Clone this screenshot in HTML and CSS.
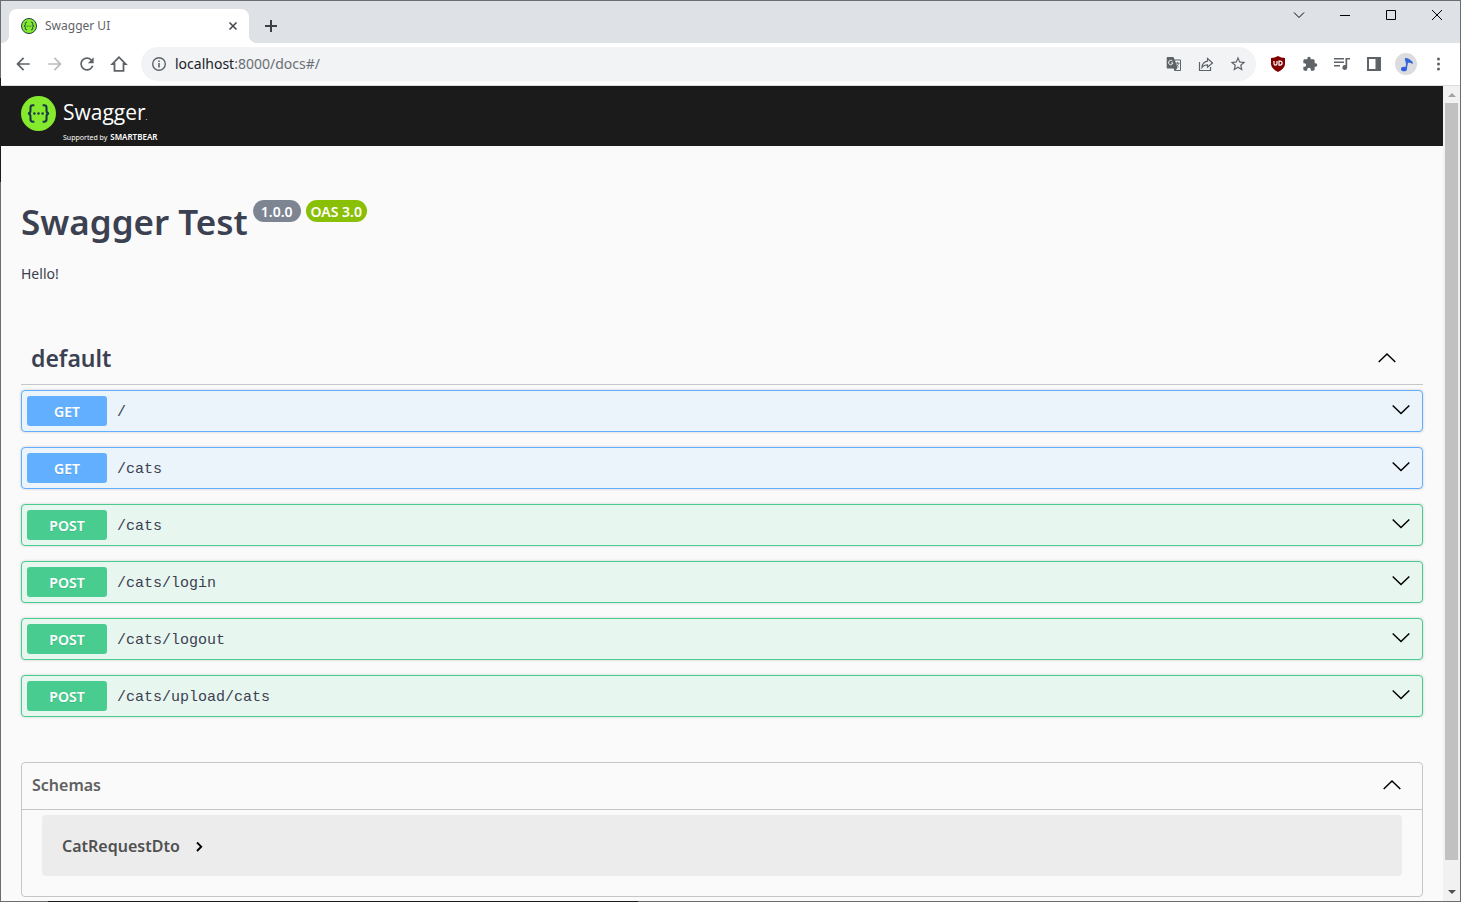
FILE: index.html
```html
<!DOCTYPE html>
<html lang="en">
<head>
<meta charset="utf-8">
<title>Swagger UI</title>
<link rel="stylesheet" href="styles.css">
</head>
<body>
<svg class="defs" aria-hidden="true">
  <symbol id="chev-down" viewBox="0 0 20 20"><path d="M1.700 4.500 10 12.500l8.300-8" fill="none" stroke="#000" stroke-width="1.500"/></symbol>
  <symbol id="chev-up" viewBox="0 0 20 20"><path d="M1.700 14 10 6l8.300 8" fill="none" stroke="#000" stroke-width="1.500"/></symbol>
  <symbol id="swagger-mark" viewBox="0 0 34 34">
    <g fill="none" stroke="#173647" stroke-width="2"><path d="M13 9h-1.500q-2.300 0-2.300 2.300v3q0 2.500-2.400 2.700 2.400.2 2.400 2.700v3Q9.200 25 11.500 25H13M21 9h1.500q2.300 0 2.300 2.300v3q0 2.500 2.400 2.700-2.400.2-2.400 2.700v3q0 2.300-2.300 2.300H21"/></g>
    <g fill="#173647"><circle cx="13" cy="17" r="1.200"/><circle cx="17" cy="17" r="1.200"/><circle cx="21" cy="17" r="1.200"/></g>
  </symbol>
</svg>
<div class="window">
  <header class="titlebar">
    <div class="tab">
      <svg class="favicon" viewBox="0 0 34 34"><circle cx="17" cy="17" r="16" fill="#85ea2d" stroke="#173647" stroke-width="2"/><use href="#swagger-mark"/></svg>
      <span class="tab-title">Swagger UI</span>
      <button class="tab-close" aria-label="Close tab"><svg width="16" height="16" viewBox="0 0 16 16"><path d="m4.500 4.500 7 7m0-7-7 7" stroke="#45494d" stroke-width="1.600"/></svg></button>
    </div>
    <button class="new-tab" aria-label="New tab"><svg width="16" height="16" viewBox="0 0 16 16"><path d="M8 2v12M2 8h12" stroke="#3c4043" stroke-width="2"/></svg></button>
    <div class="controls">
      <button aria-label="Search tabs"><svg width="12" height="12" viewBox="0 0 12 12"><path d="m1 3.500 5 5 5-5"/></svg></button>
      <button aria-label="Minimize"><svg width="12" height="12" viewBox="0 0 12 12"><path d="M1 6.500h10"/></svg></button>
      <button aria-label="Maximize"><svg width="12" height="12" viewBox="0 0 12 12"><path d="M1.500 1.500h9v9h-9z"/></svg></button>
      <button aria-label="Close"><svg width="12" height="12" viewBox="0 0 12 12"><path d="m1 1 10 10m0-10L1 11"/></svg></button>
    </div>
  </header>
  <nav class="toolbar">
    <button aria-label="Back"><svg width="20" height="20" viewBox="0 0 24 24"><path d="M20 11H7.830l5.590-5.590L12 4l-8 8 8 8 1.410-1.410L7.830 13H20v-2z"/></svg></button>
    <button class="faded" aria-label="Forward"><svg width="20" height="20" viewBox="0 0 24 24"><path d="m12 4-1.410 1.410L16.170 11H4v2h12.170l-5.580 5.590L12 20l8-8z"/></svg></button>
    <button aria-label="Reload"><svg width="20" height="20" viewBox="0 0 24 24"><path d="M17.650 6.350C16.200 4.900 14.210 4 12 4c-4.420 0-7.990 3.580-7.990 8s3.570 8 7.990 8c3.730 0 6.840-2.550 7.730-6h-2.080c-.82 2.330-3.040 4-5.650 4-3.310 0-6-2.690-6-6s2.690-6 6-6c1.660 0 3.140.69 4.220 1.780L13 11h7V4l-2.350 2.350z"/></svg></button>
    <button aria-label="Home"><svg width="18" height="18" viewBox="0 0 18 18"><path d="M9 2.200 2.300 9h2.200v6.800h9V9h2.200z" fill="none" stroke="#5f6368" stroke-width="1.800"/></svg></button>
    <div class="omnibox">
      <svg class="info" width="16" height="16" viewBox="0 0 16 16"><circle cx="8" cy="8" r="6.300" fill="none" stroke="#5f6368" stroke-width="1.400"/><path d="M7.200 7h1.600v4.500H7.200zM7.200 4.400h1.600V6H7.200z"/></svg>
      <div class="url"><span class="host">localhost</span>:8000/docs#/</div>
      <button aria-label="Translate"><svg width="16" height="16" viewBox="0 0 16 16"><path d="M1.500 1h6l1 2.500h5.500a1 1 0 0 1 1 1V14a1 1 0 0 1-1 1H8.500l-1-2.500h-6a.8.8 0 0 1-.8-.8V1.800A.8.800 0 0 1 1.500 1z"/><path d="M9 4.500h5V14H9.800l1.700-2z" fill="#f1f3f4"/><path d="M6.500 5.200A2.200 2.200 0 1 0 6.900 7H5" fill="none" stroke="#f1f3f4" stroke-width="1"/><path d="M9.500 7.200h4M11.500 6v1.200m1.300 0q-.8 2.500-3 3.800m.5-2.500q.8 1.500 2.500 2.700" fill="none" stroke="#5f6368" stroke-width=".9"/></svg></button>
      <button aria-label="Share"><svg width="16" height="16" viewBox="0 0 16 16"><path d="M1.500 6v8.500h11V11M9.500 2.500 14.500 7l-5 4.300V8.800q-3.500-.1-5.500 2.700.3-5.500 5.500-6.300z" fill="none" stroke="#5f6368" stroke-width="1.200"/></svg></button>
      <button aria-label="Bookmark"><svg width="18" height="18" viewBox="0 0 24 24"><path d="m22 9.240-7.190-.62L12 2 9.190 8.630 2 9.240l5.460 4.730L5.820 21 12 17.270 18.180 21l-1.630-7.030L22 9.240zM12 15.400l-3.760 2.270 1-4.280-3.320-2.880 4.380-.38L12 6.100l1.710 4.040 4.380.38-3.320 2.880 1 4.280L12 15.400z"/></svg></button>
    </div>
    <div class="extensions">
      <button aria-label="uBlock Origin"><svg width="16" height="16" viewBox="0 0 16 16"><path d="M8 0q3.200 2 7 2v6q0 4.500-7 8-7-3.500-7-8V2q3.800 0 7-2z" fill="#800000"/><path d="M4 5v2.800q0 1.400 1.500 1.400T7 7.800V5m2 .1h1.100q2 0 2 2t-2 2H9z" fill="none" stroke="#fff" stroke-width="1.200"/></svg></button>
      <button aria-label="Extensions"><svg width="16" height="16" viewBox="0 0 24 24"><path d="M20.500 11H19V7c0-1.100-.9-2-2-2h-4V3.500a2.500 2.500 0 0 0-5 0V5H4c-1.100 0-1.990.9-1.990 2v3.800H3.500c1.490 0 2.700 1.210 2.700 2.700s-1.210 2.700-2.700 2.700H2V20c0 1.100.9 2 2 2h3.800v-1.500c0-1.490 1.210-2.700 2.700-2.700s2.700 1.210 2.700 2.700V22H17c1.100 0 2-.9 2-2v-4h1.500a2.500 2.500 0 0 0 0-5z"/></svg></button>
      <button aria-label="Media"><svg width="18" height="16" viewBox="0 0 18 16"><path d="M1 2h10v1.500H1zM1 5.500h10V7H1zM1 9h6v1.500H1z"/><path d="M12.500 2H17v1.500h-2.800v8A2.400 2.400 0 1 1 12.500 9.200z"/></svg></button>
      <button aria-label="Side panel"><svg width="14" height="14" viewBox="0 0 14 14"><path d="M0 0h14v14H0zM2 2v10h6.500V2z" fill-rule="evenodd"/></svg></button>
      <button aria-label="Profile"><svg width="22" height="22" viewBox="0 0 22 22"><circle cx="11" cy="11" r="11" fill="#dadce0"/><path d="M10 5q3.500-.5 7.500 3.800L18 11q-3-1.700-5.500-1.200l-.8 5.500" fill="#3367d6"/><path d="m10.500 5.500 1.600 4-1 6" fill="none" stroke="#3367d6" stroke-width="1.600"/><ellipse cx="9" cy="16" rx="3" ry="2.300" fill="#2f5fe0"/></svg></button>
      <button aria-label="Menu"><svg width="16" height="16" viewBox="0 0 16 16"><circle cx="8.500" cy="3" r="1.500"/><circle cx="8.500" cy="8" r="1.500"/><circle cx="8.500" cy="13" r="1.500"/></svg></button>
    </div>
  </nav>
  <div class="viewport">
    <div class="page">
      <div class="topbar">
        <a class="logo" href="#" aria-label="Swagger">
          <svg class="logo-mark" viewBox="0 0 34 34"><circle cx="17" cy="17" r="17" fill="#85ea2d"/><use href="#swagger-mark"/></svg>
          <span class="logo-words">
            <span class="logo-name">Swagger<i>.</i></span>
            <span class="logo-by">Supported by <b>SMARTBEAR</b></span>
          </span>
        </a>
      </div>
      <main class="content">
        <div class="info-head">
          <h1>Swagger Test</h1>
          <span class="badge">1.0.0</span>
          <span class="badge oas">OAS 3.0</span>
        </div>
        <p class="description">Hello!</p>
        <section>
          <h2 class="tag"><span>default</span><button aria-label="Collapse"><svg width="20" height="20"><use href="#chev-up"/></svg></button></h2>
          <div class="operations">
            <button class="op get"><span class="method">GET</span><span class="path">/</span><svg width="20" height="20"><use href="#chev-down"/></svg></button>
            <button class="op get"><span class="method">GET</span><span class="path">/cats</span><svg width="20" height="20"><use href="#chev-down"/></svg></button>
            <button class="op post"><span class="method">POST</span><span class="path">/cats</span><svg width="20" height="20"><use href="#chev-down"/></svg></button>
            <button class="op post"><span class="method">POST</span><span class="path">/cats/login</span><svg width="20" height="20"><use href="#chev-down"/></svg></button>
            <button class="op post"><span class="method">POST</span><span class="path">/cats/logout</span><svg width="20" height="20"><use href="#chev-down"/></svg></button>
            <button class="op post"><span class="method">POST</span><span class="path">/cats/upload/cats</span><svg width="20" height="20"><use href="#chev-down"/></svg></button>
          </div>
        </section>
        <section class="models">
          <button class="models-head"><span>Schemas</span><svg width="20" height="20"><use href="#chev-up"/></svg></button>
          <button class="model"><span>CatRequestDto</span><svg width="10" height="12" viewBox="0 0 10 12"><path d="m3 2.500 4.200 4.200L3 11" fill="none" stroke="#000" stroke-width="1.900"/></svg></button>
        </section>
      </main>
    </div>
    <div class="scrollbar" aria-hidden="true">
      <svg width="17" height="17"><path d="m5 11 4-4 4 4z" fill="#a3a3a3"/></svg>
      <div class="track"><div class="thumb"></div></div>
      <svg width="17" height="17"><path d="m5 6 4 4 4-4z" fill="#505050"/></svg>
    </div>
  </div>
</div>
</body>
</html>
```
FILE: styles.css
```css
* { box-sizing: border-box; }
html, body { height: 100%; margin: 0; }
body { font-family: "Noto Sans", sans-serif; color: #3b4151; }
button {
  display: flex; align-items: center; justify-content: center;
  margin: 0; padding: 0; border: 0; background: none; color: inherit; font: inherit;
}
svg { display: block; flex: none; }
.defs { position: absolute; width: 0; height: 0; }

.window {
  display: flex; flex-direction: column; height: 100%; padding: 1px;
  background:
    linear-gradient(#1b1b1b, #1b1b1b) 0 78px / 1px 104px no-repeat,
    linear-gradient(#1b1b1b, #1b1b1b) 48px 100% / 590px 1px no-repeat,
    #6b6c6e;
}

.titlebar { display: flex; height: 42px; flex: none; padding-left: 8px; background: #dee1e6; }
.tab {
  position: relative; display: flex; align-items: center; gap: 8px;
  width: 240px; height: 34px; margin-top: 8px; padding: 0 8px 0 12px;
  border-radius: 8px 8px 0 0; background: #fff;
}
.tab::before, .tab::after { content: ""; position: absolute; bottom: 0; width: 8px; height: 8px; }
.tab::before { right: 100%; background: radial-gradient(circle at 0 0, #dee1e6 8px, #fff 8px); }
.tab::after { left: 100%; background: radial-gradient(circle at 100% 0, #dee1e6 8px, #fff 8px); }
.favicon { width: 16px; height: 16px; }
.tab-title { flex: 1; padding-bottom: 2px; font-size: 12px; color: #5f6368; }
.new-tab { width: 28px; height: 28px; margin: 11px 0 0 8px; }
.controls { display: flex; margin-left: auto; }
.controls button { width: 46px; height: 28px; }
.controls path { fill: none; stroke: #000; stroke-width: 1; }

.toolbar {
  display: flex; align-items: center; height: 43px; flex: none;
  padding: 0 6px; border-bottom: 1px solid #dadce0; background: #fff; fill: #5f6368;
}
.toolbar button { width: 32px; height: 32px; flex: none; }
.toolbar .faded { fill: #babcbe; }
.omnibox {
  display: flex; align-items: center; flex: 1; height: 34px;
  margin: 0 6px; padding: 0 2px 0 10px; border-radius: 17px; background: #f1f3f4;
}
.url { flex: 1; margin-left: 8px; padding-bottom: 2px; font-size: 14px; color: #6b6f74; }
.host { color: #202124; }
.extensions { display: flex; }

.viewport { display: flex; flex: 1; min-height: 0; background: #fafafa; }
.page { flex: 1; overflow: hidden; }
.scrollbar { display: flex; flex-direction: column; width: 17px; background: #f1f1f1; }
.track { flex: 1; padding: 0 2px; }
.thumb { height: calc(100% - 24px); background: #c1c1c1; }

.topbar { display: flex; height: 60px; padding: 10px 20px; background: #1b1b1b; }
.logo { display: flex; gap: 7px; color: #fff; text-decoration: none; }
.logo-mark { width: 35px; height: 35px; }
.logo-words { display: flex; flex-direction: column; }
.logo-name { font-family: "Open Sans", sans-serif; font-size: 21px; line-height: 32px; }
.logo-name i { font-size: 8px; }
.logo-by { display: flex; align-items: baseline; gap: 3px; font-size: 7px; line-height: 8px; white-space: nowrap; }
.logo-by b { font-size: 8px; font-weight: 600; }

.content { padding: 50px 20px 0; }
.info-head { display: flex; gap: 5px; }
h1 { margin: 0; font-size: 35px; font-weight: 600; line-height: 52px; }
.badge {
  height: 22px; margin-top: 4px; padding: 0 8px; border-radius: 11px;
  background: #7d8492; color: #fff; font-size: 14px; font-weight: 600; line-height: 23px;
}
.badge.oas { padding: 0 5px; background: #89bf04; }
.description { margin: 16px 0 0; font-size: 14px; line-height: 20px; }
.tag {
  display: flex; align-items: center; justify-content: space-between;
  height: 51px; margin: 50px 0 5px; padding: 0 26px 2px 10px;
  border-bottom: 1px solid #c4c6ca; font-size: 23px; font-weight: 600;
}
.operations { display: flex; flex-direction: column; gap: 15px; }
.op {
  height: 42px; padding: 0 11px 0 5px; border: 1px solid; border-radius: 4px;
  box-shadow: 0 0 3px rgba(0, 0, 0, .19);
}
.get { border-color: #61affe; background: #ebf3fb; }
.post { border-color: #49cc90; background: #e8f6f0; }
.method {
  width: 80px; height: 30px; border-radius: 3px; color: #fff; font-size: 14px; font-weight: 600;
  line-height: 32px; text-shadow: 0 1px 0 rgba(0, 0, 0, .1);
}
.get .method { background: #61affe; }
.post .method { background: #49cc90; }
.path {
  flex: 1; padding: 2px 0 0 10px; text-align: left; color: #3b4151;
  font-family: "Liberation Mono", monospace; font-size: 15px;
}
.models { margin-top: 45px; border: 1px solid #c4c6ca; border-radius: 4px; padding-bottom: 20px; }
.models-head {
  justify-content: space-between; width: 100%; height: 47px; padding: 0 20px 3px 10px;
  border-bottom: 1px solid #c4c6ca; color: #606060; font-size: 16px; font-weight: 600;
}
.model {
  justify-content: flex-start; gap: 14px; width: calc(100% - 40px); height: 61px;
  margin: 5px 20px 0; padding: 0 20px; border-radius: 4px;
  background: #ececec; color: #505050; font-size: 16px; font-weight: 600;
}
```
